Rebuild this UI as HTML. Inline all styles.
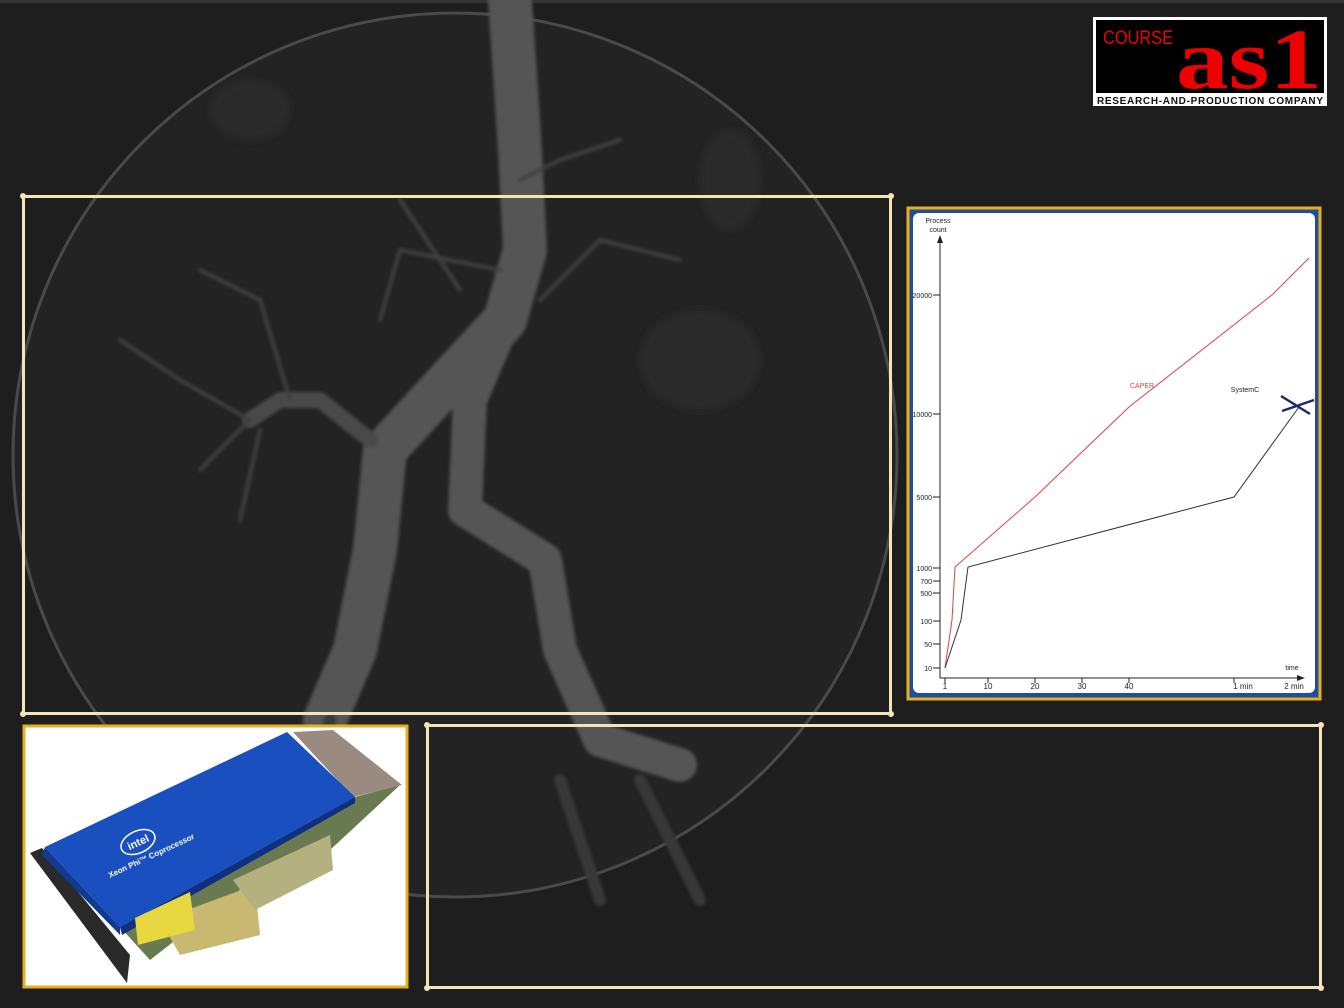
<!DOCTYPE html>
<html><head><meta charset="utf-8"><style>
html,body{margin:0;padding:0;background:#1e1e1e;}
body{width:1344px;height:1008px;overflow:hidden;position:relative;font-family:"Liberation Sans",sans-serif;}
svg{position:absolute;left:0;top:0}
</style></head><body>
<svg width="1344" height="1008" viewBox="0 0 1344 1008">
<defs>
<filter id="bl" x="-20%" y="-20%" width="140%" height="140%"><feGaussianBlur stdDeviation="4"/></filter>
<filter id="bl2"><feGaussianBlur stdDeviation="1.5"/></filter>
</defs>
<rect width="1344" height="1008" fill="#1e1e1e"/>
<rect width="1344" height="3" fill="#333"/>
<!-- angiography approximation -->
<circle cx="455" cy="455" r="442" fill="#232323" stroke="#4a4a4a" stroke-width="3"/>
<g fill="none" stroke-linecap="round" stroke-linejoin="round" filter="url(#bl2)">
<path d="M510 0 L520 150 L525 250 L505 320 L440 390 L385 450 L375 550 L355 650 L325 720" stroke="#555" stroke-width="44"/>
<path d="M500 330 L470 400 L465 510 L545 560 L560 650 L600 740 L680 765" stroke="#555" stroke-width="34"/>
<path d="M370 440 L320 400 L280 400 L250 420" stroke="#4a4a4a" stroke-width="16"/>
<path d="M250 420 L180 380 L120 340 M250 420 L200 470 M260 430 L240 520 M290 400 L260 300 L200 270" stroke="#404040" stroke-width="4"/>
<path d="M500 270 L400 250 L380 320 M520 180 L560 160 L620 140 M460 290 L400 200 M540 300 L600 240 L680 260" stroke="#404040" stroke-width="4"/>
<path d="M560 780 L600 900 M640 780 L700 900 M330 720 L310 800" stroke="#383838" stroke-width="12"/>
</g>
<g fill="#2a2a2a" filter="url(#bl)"><ellipse cx="250" cy="110" rx="40" ry="30"/><ellipse cx="730" cy="180" rx="30" ry="50"/><ellipse cx="700" cy="360" rx="60" ry="50"/></g>

<!-- frames -->
<g fill="none" stroke="#f3e5b8" stroke-width="3">
<rect x="23.5" y="196.5" width="867" height="517"/>
<rect x="427.5" y="725.5" width="893" height="262"/>
</g>
<g fill="#f3e5b8"><circle cx="23" cy="196" r="3"/><circle cx="891" cy="196" r="3"/><circle cx="23" cy="714" r="3"/><circle cx="891" cy="714" r="3"/>
<circle cx="427" cy="725" r="3"/><circle cx="1321" cy="725" r="3"/><circle cx="427" cy="988" r="3"/><circle cx="1321" cy="988" r="3"/></g>

<!-- chart -->
<rect x="908" y="208" width="412" height="491" fill="#1f4f9a" stroke="#e8b020" stroke-width="3"/>
<rect x="913" y="213" width="402" height="480" rx="6" fill="#ffffff"/>
<g stroke="#222" stroke-width="1" fill="none">
<path d="M940 678 L940 242 M940 678 L1298 678"/>
<path d="M933 295h7M933 414h7M933 497h7M933 568h7M933 581h7M933 593h7M933 621h7M933 644h7M933 668h7"/>
<path d="M945 678v5M988 678v5M1035 678v5M1082 678v5M1129 678v5M1234 678v5"/>
</g>
<path d="M940 235 l-3 8 h6z M1305 678 l-8 -3 v6z" fill="#222"/>
<polyline points="945,668 952,620 955,567 1035,497 1129,407 1272,295 1309,258" fill="none" stroke="#e04040" stroke-width="1"/>
<polyline points="945,668 961,620 968,567 1234,497 1299,407" fill="none" stroke="#333" stroke-width="1"/>
<path d="M1281 396 L1310 414 M1282 411 L1314 400" stroke="#1a2a6a" stroke-width="2.5"/>
<g font-size="7" fill="#222" font-family="Liberation Sans,sans-serif">
<text x="938" y="223" text-anchor="middle">Process</text><text x="938" y="232" text-anchor="middle">count</text>
<g text-anchor="end"><text x="932" y="298">20000</text><text x="932" y="417">10000</text><text x="932" y="500">5000</text><text x="932" y="571">1000</text><text x="932" y="584">700</text><text x="932" y="596">500</text><text x="932" y="624">100</text><text x="932" y="647">50</text><text x="932" y="671">10</text></g>
<g text-anchor="middle" font-size="8"><text x="945" y="689">1</text><text x="988" y="689">10</text><text x="1035" y="689">20</text><text x="1082" y="689">30</text><text x="1129" y="689">40</text><text x="1243" y="689">1 min</text><text x="1294" y="689">2 min</text></g>
<text x="1292" y="670" text-anchor="middle">time</text>
<text x="1142" y="388" text-anchor="middle" fill="#e04040">CAPER</text>
<text x="1245" y="392" text-anchor="middle">SystemC</text>
</g>

<!-- intel card -->
<rect x="24" y="726" width="383" height="261" fill="#fff" stroke="#e8b020" stroke-width="3"/>
<g>
<polygon points="30,853 42,848 130,955 127,983" fill="#2a2a2a"/>
<polygon points="120,927 355,797 400,785 330,850 240,890 150,960" fill="#6a7a50"/>
<polygon points="160,920 255,885 260,935 180,955" fill="#c8b870"/>
<polygon points="233,880 330,835 333,870 255,910" fill="#b5b080"/>
<polygon points="293,732 333,730 402,785 353,797" fill="#9a8a80"/>
<polygon points="45,847 287,732 355,797 120,927" fill="#1a4fc0"/>
<polygon points="45,847 120,927 120,935 42,855" fill="#123a90"/>
<polygon points="120,927 355,797 355,803 122,935" fill="#0f2f80"/>
<polygon points="135,918 190,892 195,930 138,945" fill="#e8d840"/>
<ellipse cx="138" cy="842" rx="18" ry="11" transform="rotate(-25 138 842)" fill="none" stroke="#fff" stroke-width="1.5"/>
<text x="138" y="846" fill="#fff" font-size="11" font-weight="bold" text-anchor="middle" transform="rotate(-25 138 842)">intel</text>
<text x="110" y="878" fill="#fff" font-size="8" font-weight="bold" transform="rotate(-25 110 878)">Xeon Phi™ Coprocessor</text>
</g>

<!-- logo -->
<rect x="1093" y="17" width="234" height="89" fill="#fff"/>
<rect x="1096" y="20" width="228" height="73" fill="#000"/>
<text x="1103" y="44" fill="#e00" font-size="19" font-family="Liberation Sans,sans-serif" textLength="70" lengthAdjust="spacingAndGlyphs">COURSE</text>
<text x="1176" y="88" fill="#e00" font-size="86" font-weight="bold" font-family="Liberation Serif,serif" textLength="146" lengthAdjust="spacingAndGlyphs">as1</text>
<text x="1210" y="104" fill="#111" font-size="10" font-weight="bold" text-anchor="middle" font-family="Liberation Sans,sans-serif" textLength="226">RESEARCH-AND-PRODUCTION COMPANY</text>
</svg>
</body></html>
